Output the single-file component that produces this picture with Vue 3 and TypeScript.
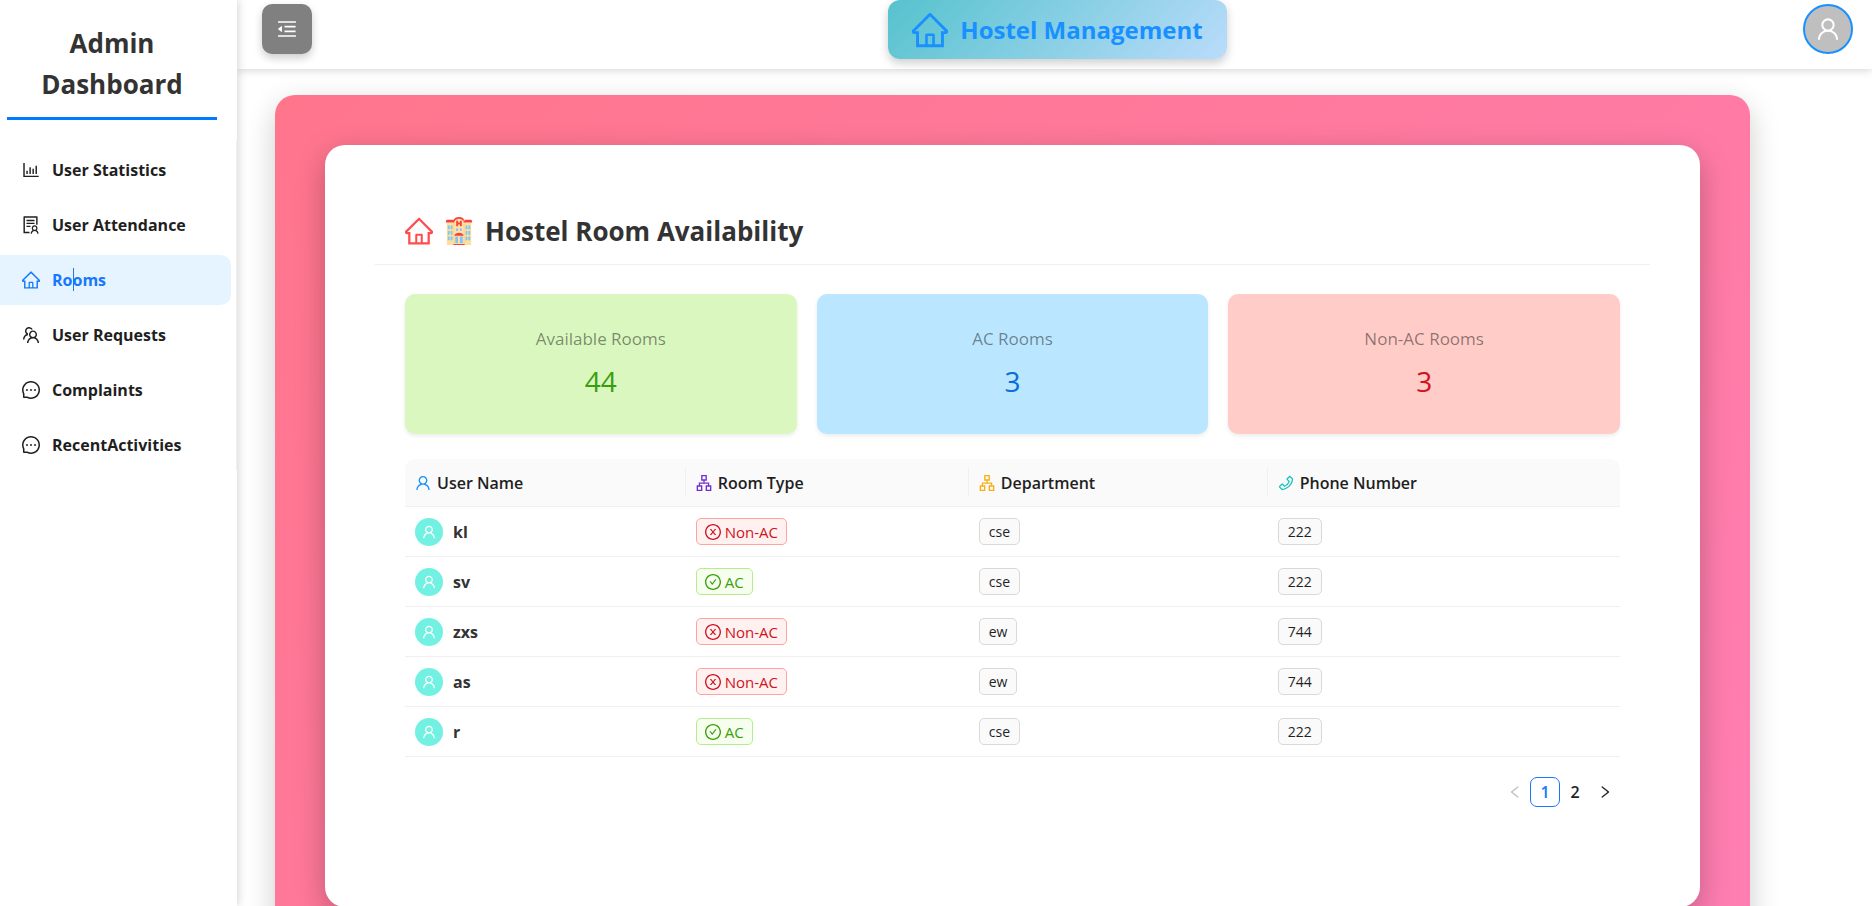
<script setup lang="ts">
import { ref } from 'vue'

const icons = {
  home: 'M946.5 505L560.1 118.8l-25.9-25.9a31.5 31.5 0 00-44.4 0L77.5 505a63.9 63.9 0 00-18.8 46c.4 35.2 29.7 63.3 64.9 63.3h42.5V940h691.8V614.3h43.4c17.1 0 33.2-6.7 45.3-18.8a63.6 63.6 0 0018.7-45.3c0-17-6.7-33.1-18.8-45.2zM568 868H456V664h112v204zm217.9-325.7V868H632V640c0-22.1-17.9-40-40-40H432c-22.1 0-40 17.9-40 40v228H238.1V542.3h-96l370-369.7 23.1 23.1L882 542.3h-96.1z',
  user: 'M858.5 763.6a374 374 0 00-80.6-119.5 375.63 375.63 0 00-119.5-80.6c-.4-.2-.8-.3-1.2-.5C719.5 518 760 444.7 760 362c0-137-111-248-248-248S264 225 264 362c0 82.7 40.5 156 102.8 201.1-.4.2-.8.3-1.2.5-44.8 18.9-85 46-119.5 80.6a375.63 375.63 0 00-80.6 119.5A371.7 371.7 0 00136 901.8a8 8 0 008 8.2h60c4.4 0 7.9-3.5 8-7.8 2-77.2 33-149.5 87.8-204.3 56.7-56.7 132-87.9 212.2-87.9s155.5 31.2 212.2 87.9C779 752.7 810 825 812 902.2c.1 4.4 3.6 7.8 8 7.8h60a8 8 0 008-8.2c-1-47.8-10.9-94.3-29.5-138.2zM512 534c-45.9 0-89.1-17.9-121.6-50.4S340 407.9 340 362c0-45.9 17.9-89.1 50.4-121.6S466.1 190 512 190s89.1 17.9 121.6 50.4S684 316.1 684 362c0 45.9-17.9 89.1-50.4 121.6S557.9 534 512 534z',
  chart: 'M888 792H200V168c0-4.4-3.6-8-8-8h-56c-4.4 0-8 3.6-8 8v688c0 4.4 3.6 8 8 8h752c4.4 0 8-3.6 8-8v-56c0-4.4-3.6-8-8-8zm-600-80h56c4.4 0 8-3.6 8-8V560c0-4.4-3.6-8-8-8h-56c-4.4 0-8 3.6-8 8v144c0 4.4 3.6 8 8 8zm152 0h56c4.4 0 8-3.6 8-8V384c0-4.4-3.6-8-8-8h-56c-4.4 0-8 3.6-8 8v320c0 4.4 3.6 8 8 8zm152 0h56c4.4 0 8-3.6 8-8V462c0-4.4-3.6-8-8-8h-56c-4.4 0-8 3.6-8 8v242c0 4.4 3.6 8 8 8zm152 0h56c4.4 0 8-3.6 8-8V304c0-4.4-3.6-8-8-8h-56c-4.4 0-8 3.6-8 8v400c0 4.4 3.6 8 8 8z',
  solution: 'M688 264c0-4.4-3.6-8-8-8H296c-4.4 0-8 3.6-8 8v48c0 4.4 3.6 8 8 8h384c4.4 0 8-3.6 8-8v-48zm-8 136H296c-4.4 0-8 3.6-8 8v48c0 4.4 3.6 8 8 8h384c4.4 0 8-3.6 8-8v-48c0-4.4-3.6-8-8-8zM480 544H296c-4.4 0-8 3.6-8 8v48c0 4.4 3.6 8 8 8h184c4.4 0 8-3.6 8-8v-48c0-4.4-3.6-8-8-8zm-48 308H208V148h560v344c0 4.4 3.6 8 8 8h56c4.4 0 8-3.6 8-8V108c0-17.7-14.3-32-32-32H168c-17.7 0-32 14.3-32 32v784c0 17.7 14.3 32 32 32h264c4.4 0 8-3.6 8-8v-56c0-4.4-3.6-8-8-8zm356.8-74.4c29-26.3 47.2-64.3 47.2-106.6 0-79.5-64.5-144-144-144s-144 64.5-144 144c0 42.3 18.2 80.3 47.2 106.6-57 32.5-96.2 92.7-99.2 162.1-.2 4.5 3.5 8.3 8 8.3h48.1c4.2 0 7.7-3.3 8-7.6C564 871.2 621.7 816 692 816s128 55.2 131.9 124.4c.2 4.2 3.7 7.6 8 7.6H880c4.6 0 8.2-3.8 8-8.3-2.9-69.5-42.2-129.6-99.2-162.1zM692 591c44.2 0 80 35.8 80 80s-35.8 80-80 80-80-35.8-80-80 35.8-80 80-80z',
  team: 'M824.2 699.9a301.55 301.55 0 00-86.4-60.4C783.1 602.8 812 546.8 812 484c0-110.8-92.4-201.7-203.2-200-109.1 1.7-197 90.6-197 200 0 62.8 29 118.8 74.2 155.5a300.95 300.95 0 00-86.4 60.4C345 754.6 314 826.8 312 903.8a8 8 0 008 8.2h56c4.3 0 7.9-3.4 8-7.7 1.9-58 25.4-112.3 66.7-153.5A226.62 226.62 0 01612 684c60.9 0 118.2 23.7 161.3 66.8C814.6 792 838 846.3 840 904.3c.1 4.3 3.7 7.7 8 7.7h56a8 8 0 008-8.2c-2-77-33-149.2-87.8-203.9zM612 612c-34.2 0-66.4-13.3-90.5-37.5a126.86 126.86 0 01-37.5-91.8c.3-32.8 13.4-64.5 36.3-88 24-24.6 56.1-38.3 90.4-38.7 33.9-.3 66.8 12.9 91 36.6 24.8 24.3 38.4 56.8 38.4 91.4 0 34.2-13.3 66.3-37.5 90.5A127.3 127.3 0 01612 612zM361.5 510.4c-.9-8.7-1.4-17.5-1.4-26.4 0-15.9 1.5-31.4 4.3-46.5.7-3.6-1.2-7.3-4.5-8.8-13.6-6.1-26.1-14.5-36.9-25.1a127.54 127.54 0 01-38.7-95.4c.9-32.1 13.8-62.6 36.3-85.6 24.7-25.3 57.9-39.1 93.2-38.7 31.9.3 62.7 12.6 86 34.4 7.9 7.4 14.7 15.6 20.4 24.4 2 3.1 5.9 4.4 9.3 3.2 17.6-6.1 36.2-10.4 55.3-12.4 5.6-.6 8.8-6.6 6.3-11.6-32.5-64.3-98.9-108.7-175.7-109.9-110.9-1.7-203.3 89.2-203.3 199.9 0 62.8 28.9 118.8 74.2 155.5-31.8 14.7-61.1 35-86.5 60.4-54.8 54.7-85.8 126.9-87.8 204a8 8 0 008 8.2h56.1c4.3 0 7.9-3.4 8-7.7 1.9-58 25.4-112.3 66.7-153.5 29.4-29.4 65.4-49.8 104.7-59.7 3.9-1 6.5-4.7 6-8.7z',
  message: 'M464 512a48 48 0 1096 0 48 48 0 10-96 0zm200 0a48 48 0 1096 0 48 48 0 10-96 0zm-400 0a48 48 0 1096 0 48 48 0 10-96 0zm661.2-173.6c-22.6-53.7-55-101.9-96.3-143.3a444.35 444.35 0 00-143.3-96.3C630.6 75.7 572.2 64 512 64h-2c-60.6.3-119.3 12.3-174.5 35.9a445.35 445.35 0 00-142 96.5c-40.9 41.3-73 89.3-95.2 142.8-23 55.4-34.6 114.3-34.3 174.9A449.4 449.4 0 00112 714v152a46 46 0 0046 46h152.1A449.4 449.4 0 00510 960h2.1c59.9 0 118-11.6 172.7-34.3a444.48 444.48 0 00142.8-95.2c41.3-40.9 73.8-88.7 96.5-142 23.6-55.2 35.6-113.9 35.9-174.5.3-60.9-11.5-120-34.8-175.6zm-151.1 438C704 845.8 611 884 512 884h-1.7c-60.3-.3-120.2-15.3-173.1-43.5l-8.4-4.5H188V695.2l-4.5-8.4C155.3 633.9 140.3 574 140 513.7c-.4-99.7 37.7-193.3 107.6-263.8 69.8-70.5 163.1-109.5 262.8-109.9h1.7c50 0 98.5 9.7 144.2 28.9 44.6 18.7 84.6 45.6 119 80 34.3 34.3 61.3 74.4 80 119 19.4 46.2 29.1 95.2 28.9 145.8-.6 99.6-39.7 192.9-110.1 262.7z',
  fold: 'M408 442h480c4.4 0 8-3.6 8-8v-56c0-4.4-3.6-8-8-8H408c-4.4 0-8 3.6-8 8v56c0 4.4 3.6 8 8 8zm-8 204c0 4.4 3.6 8 8 8h480c4.4 0 8-3.6 8-8v-56c0-4.4-3.6-8-8-8H408c-4.4 0-8 3.6-8 8v56zm504-486H120c-4.4 0-8 3.6-8 8v56c0 4.4 3.6 8 8 8h784c4.4 0 8-3.6 8-8v-56c0-4.4-3.6-8-8-8zm0 632H120c-4.4 0-8 3.6-8 8v56c0 4.4 3.6 8 8 8h784c4.4 0 8-3.6 8-8v-56c0-4.4-3.6-8-8-8zM115.4 518.9L271.7 642c5.8 4.6 14.4.5 14.4-6.9V388.9c0-7.4-8.5-11.5-14.4-6.9L115.4 505.1a8.74 8.74 0 000 13.8z',
  apartment: 'M908 640H804V488c0-4.4-3.6-8-8-8H548v-96h108c8.8 0 16-7.2 16-16V80c0-8.8-7.2-16-16-16H368c-8.8 0-16 7.2-16 16v288c0 8.8 7.2 16 16 16h108v96H228c-4.4 0-8 3.6-8 8v152H116c-8.8 0-16 7.2-16 16v288c0 8.8 7.2 16 16 16h288c8.8 0 16-7.2 16-16V656c0-8.8-7.2-16-16-16H292v-88h440v88H620c-8.8 0-16 7.2-16 16v288c0 8.8 7.2 16 16 16h288c8.8 0 16-7.2 16-16V656c0-8.8-7.2-16-16-16zm-564 76v168H176V716h168zm84-408V140h168v168H428zm420 576H680V716h168v168z',
  phone: 'M877.1 238.7L770.6 132.3c-13-13-30.4-20.3-48.8-20.3s-35.8 7.2-48.8 20.3L558.3 246.8c-13 13-20.3 30.5-20.3 48.9 0 18.5 7.2 35.8 20.3 48.9l89.6 89.7a405.46 405.46 0 01-86.4 127.3c-36.7 36.9-79.6 66-127.2 86.6l-89.6-89.7c-13-13-30.4-20.3-48.8-20.3a68.2 68.2 0 00-48.8 20.3L132.3 673c-13 13-20.3 30.5-20.3 48.9 0 18.5 7.2 35.8 20.3 48.9l106.4 106.4c22.2 22.2 52.8 34.9 84.2 34.9 6.5 0 12.8-.5 19.2-1.6 132.4-21.8 263.8-92.3 369.9-198.3C818 606 888.4 474.6 910.4 342.1c6.3-37.6-6.3-76.3-33.3-103.4zm-37.6 91.5c-19.5 117.9-82.9 235.5-178.4 331s-213 158.9-330.9 178.4c-14.8 2.5-30-2.5-40.8-13.2L184.9 721.9 295.7 611l119.8 120 .9.9 21.6-8a481.29 481.29 0 00285.7-285.8l8-21.6-120.8-120.7 110.8-110.9 104.5 104.5c10.8 10.8 15.8 26 13.3 40.8z',
  cross: 'M512 64C264.6 64 64 264.6 64 512s200.6 448 448 448 448-200.6 448-448S759.4 64 512 64zm0 820c-205.4 0-372-166.6-372-372s166.6-372 372-372 372 166.6 372 372-166.6 372-372 372zM685.4 354.8c0-4.4-3.6-8-8-8l-66 .3L512 465.6l-99.3-118.4-66.1-.3c-4.4 0-8 3.5-8 8 0 1.9.7 3.7 1.9 5.2l130.1 155L340.5 670a8.32 8.32 0 00-1.9 5.2c0 4.4 3.6 8 8 8l66.1-.3L512 564.4l99.3 118.4 66 .3c4.4 0 8-3.5 8-8 0-1.9-.7-3.7-1.9-5.2L553.5 515l130.1-155c1.2-1.4 1.8-3.3 1.8-5.2z',
  check: 'M512 64C264.6 64 64 264.6 64 512s200.6 448 448 448 448-200.6 448-448S759.4 64 512 64zm0 820c-205.4 0-372-166.6-372-372s166.6-372 372-372 372 166.6 372 372-166.6 372-372 372zM699 353h-46.9c-10.2 0-19.9 4.9-25.9 13.3L469 584.3l-71.2-98.8c-6-8.3-15.6-13.3-25.9-13.3H325c-6.5 0-10.3 7.4-6.5 12.7l124.6 172.8a31.8 31.8 0 0051.7 0l210.6-292c3.9-5.3.1-12.7-6.4-12.7z',
  left: 'M724 218.3V141c0-6.7-7.7-10.4-12.9-6.3L260.3 486.8a31.86 31.86 0 000 50.3l450.8 352.1c5.3 4.1 12.9.4 12.9-6.3v-77.3c0-4.9-2.3-9.6-6.1-12.6l-360-281 360-281.1c3.8-3 6.1-7.7 6.1-12.6z',
  right: 'M765.7 486.8L314.9 134.7A7.97 7.97 0 00302 141v77.3c0 4.9 2.3 9.6 6.1 12.6l360 281.1-360 281.1c-3.9 3-6.1 7.7-6.1 12.6V883c0 6.7 7.7 10.4 12.9 6.3l450.8-352.1a31.96 31.96 0 000-50.4z',
}
type IconName = keyof typeof icons

const menu: { label: string; icon: IconName }[] = [
  { label: 'User Statistics', icon: 'chart' },
  { label: 'User Attendance', icon: 'solution' },
  { label: 'Rooms', icon: 'home' },
  { label: 'User Requests', icon: 'team' },
  { label: 'Complaints', icon: 'message' },
  { label: 'RecentActivities', icon: 'message' },
]
const current = ref('Rooms')

const stats = [
  { title: 'Available Rooms', value: 44, tone: 'green' },
  { title: 'AC Rooms', value: 3, tone: 'blue' },
  { title: 'Non-AC Rooms', value: 3, tone: 'red' },
]

const columns: { label: string; icon: IconName; tone: string }[] = [
  { label: 'User Name', icon: 'user', tone: 'c-blue' },
  { label: 'Room Type', icon: 'apartment', tone: 'c-purple' },
  { label: 'Department', icon: 'apartment', tone: 'c-gold' },
  { label: 'Phone Number', icon: 'phone', tone: 'c-cyan' },
]

interface Row { name: string; ac: boolean; dept: string; phone: string }
const rows: Row[] = [
  { name: 'kl', ac: false, dept: 'cse', phone: '222' },
  { name: 'sv', ac: true, dept: 'cse', phone: '222' },
  { name: 'zxs', ac: false, dept: 'ew', phone: '744' },
  { name: 'as', ac: false, dept: 'ew', phone: '744' },
  { name: 'r', ac: true, dept: 'cse', phone: '222' },
]
</script>

<template>
  <div class="layout">
    <aside class="sider">
      <h2 class="brand">Admin Dashboard</h2>
      <nav class="menu">
        <a
          v-for="m in menu"
          :key="m.label"
          href="#"
          class="item"
          :class="{ active: m.label === current }"
          @click.prevent="current = m.label"
        >
          <svg class="icon i18" viewBox="64 64 896 896" aria-hidden="true"><path :d="icons[m.icon]" /></svg>
          <span>{{ m.label }}</span>
          <i v-if="m.label === 'Rooms'" class="caret"></i>
        </a>
      </nav>
    </aside>

    <div class="content">
      <header class="topbar">
        <button class="toggle" type="button" aria-label="Collapse menu">
          <svg class="icon i20" viewBox="64 64 896 896" aria-hidden="true"><path :d="icons.fold" /></svg>
        </button>
        <h1 class="logo">
          <svg class="icon i36" viewBox="64 64 896 896" aria-hidden="true"><path :d="icons.home" /></svg>
          <span>Hostel Management</span>
        </h1>
        <button class="profile" type="button" aria-label="Profile">
          <svg class="icon i24" viewBox="64 64 896 896" aria-hidden="true"><path :d="icons.user" /></svg>
        </button>
      </header>

      <main class="main">
        <div class="frame">
          <section class="card">
            <h2 class="card-title">
              <svg class="icon i28 c-red" viewBox="64 64 896 896" aria-hidden="true"><path :d="icons.home" /></svg>
              <svg class="hotel" viewBox="0 0 28 30" aria-hidden="true">
                <path fill="#ffdf9e" d="M1 6h26v24H1z" />
                <path fill="#ffd08a" d="M8 6c0-3 3-5 6-5s6 2 6 5v24H8z" />
                <path fill="#ffe3a8" d="M9 6c0-3 2-4 5-4s5 1 5 4v24H9z" />
                <path fill="#f9403c" d="M1 3h8v3H0V4zM27 3h-8v3h9V4zM8 4c1-3 3-4 6-4s5 1 6 4l-1 1c-1-2-3-3-5-3s-4 1-5 3zM11 4h2v2h2V4h2v6h-2V8h-2v2h-2zM9 20c1-4 9-4 10 0zM8 29h12v1H8z" />
                <path fill="#7fc6f5" d="M2 9h2v4H2zM5 9h2v4H5zM2 15h2v4H2zM5 15h2v4H5zM2 21h2v4H2zM5 21h2v4H5zM21 9h2v4h-2zM24 9h2v4h-2zM21 15h2v4h-2zM24 15h2v4h-2zM21 21h2v4h-2zM24 21h2v4h-2zM11 12h2v3h-2zM15 12h2v3h-2zM10 21h3v7h-3zM15 21h3v7h-3z" />
              </svg>
              <span>Hostel Room Availability</span>
            </h2>

            <div class="card-body">
              <div class="stats">
                <div v-for="s in stats" :key="s.title" class="stat" :class="s.tone">
                  <div class="stat-title">{{ s.title }}</div>
                  <div class="stat-value">{{ s.value }}</div>
                </div>
              </div>

              <table class="table">
                <thead>
                  <tr>
                    <th v-for="c in columns" :key="c.label" scope="col">
                      <div class="th">
                        <svg class="icon i16" :class="c.tone" viewBox="64 64 896 896" aria-hidden="true"><path :d="icons[c.icon]" /></svg>
                        <span>{{ c.label }}</span>
                      </div>
                    </th>
                  </tr>
                </thead>
                <tbody>
                  <tr v-for="r in rows" :key="r.name">
                    <td>
                      <div class="person">
                        <span class="avatar">
                          <svg class="icon i14" viewBox="64 64 896 896" aria-hidden="true"><path :d="icons.user" /></svg>
                        </span>
                        <strong>{{ r.name }}</strong>
                      </div>
                    </td>
                    <td>
                      <span class="tag" :class="r.ac ? 'tag-ok' : 'tag-no'">
                        <svg class="icon i16" viewBox="64 64 896 896" aria-hidden="true"><path :d="r.ac ? icons.check : icons.cross" /></svg>
                        {{ r.ac ? 'AC' : 'Non-AC' }}
                      </span>
                    </td>
                    <td><span class="tag">{{ r.dept }}</span></td>
                    <td><span class="tag">{{ r.phone }}</span></td>
                  </tr>
                </tbody>
              </table>

              <nav class="pager" aria-label="Pages">
                <button type="button" disabled aria-label="Previous page">
                  <svg class="icon i14" viewBox="64 64 896 896" aria-hidden="true"><path :d="icons.left" /></svg>
                </button>
                <button type="button" class="on">1</button>
                <button type="button">2</button>
                <button type="button" aria-label="Next page">
                  <svg class="icon i14" viewBox="64 64 896 896" aria-hidden="true"><path :d="icons.right" /></svg>
                </button>
              </nav>
            </div>
          </section>
        </div>
      </main>
    </div>
  </div>
</template>

<style>
body {
  margin: 0;
  background: #fff;
}
</style>

<style scoped>
* {
  box-sizing: border-box;
}
.layout {
  display: flex;
  height: 100vh;
  overflow: hidden;
  font-family: 'Open Sans', 'Noto Sans', sans-serif;
  font-size: 16px;
  color: #1f1f1f;
}
h1, h2 {
  margin: 0;
}
button {
  padding: 0;
  font: inherit;
  cursor: pointer;
}
.icon {
  display: block;
  flex: none;
  fill: currentColor;
}
.i14 { width: 14px; height: 14px; }
.i16 { width: 16px; height: 16px; }
.i18 { width: 18px; height: 18px; }
.i20 { width: 20px; height: 20px; }
.i24 { width: 24px; height: 24px; }
.i28 { width: 28px; height: 28px; }
.i36 { width: 36px; height: 36px; }
.c-red { color: #ff4d4f; }
.c-blue { color: #1890ff; }
.c-purple { color: #722ed1; }
.c-gold { color: #faad14; }
.c-cyan { color: #13c2c2; }

.sider {
  position: relative;
  z-index: 2;
  flex: none;
  width: 237px;
  background: #fff;
  box-shadow: 2px 0 8px rgba(0, 0, 0, 0.15);
}
.brand {
  width: 210px;
  margin: 0 0 20px 7px;
  padding: 23px 20px 12px;
  border-bottom: 3px solid #007bff;
  font-size: 26px;
  line-height: 41px;
  font-weight: 700;
  text-align: center;
  color: #333;
}
.menu {
  display: flex;
  flex-direction: column;
  gap: 5px;
  padding: 5px 5px 0 0;
  border-right: 1px solid #f0f0f0;
}
.item {
  position: relative;
  display: flex;
  align-items: center;
  gap: 12px;
  height: 50px;
  padding-left: 22px;
  border-radius: 0 10px 10px 0;
  color: #1f1f1f;
  font-size: 16px;
  font-weight: 700;
  text-decoration: none;
}
.item.active {
  background: #e6f4ff;
  color: #1677ff;
}
.caret {
  position: absolute;
  left: 73px;
  top: 13px;
  width: 1px;
  height: 23px;
  background: #1677ff;
}

.content {
  flex: 1;
  min-width: 0;
  display: flex;
  flex-direction: column;
}
.topbar {
  position: relative;
  z-index: 1;
  flex: none;
  display: flex;
  align-items: flex-start;
  justify-content: space-between;
  height: 69px;
  padding: 0 19px 0 25px;
  background: #fff;
  box-shadow: 0 2px 8px rgba(0, 0, 0, 0.15);
}
.toggle,
.profile {
  display: flex;
  align-items: center;
  justify-content: center;
  width: 50px;
  height: 50px;
  margin-top: 4px;
  color: #fff;
}
.toggle {
  border: 0;
  border-radius: 10px;
  background: #808080;
  box-shadow: 0 4px 8px rgba(0, 0, 0, 0.2);
}
.profile {
  border: 2px solid #1890ff;
  border-radius: 50%;
  background: #bfbfbf;
}
.logo {
  display: flex;
  align-items: center;
  gap: 12px;
  height: 59px;
  padding: 0 24px;
  border-radius: 12px;
  background: linear-gradient(135deg, #56c2cd, #badcfb);
  box-shadow: 0 4px 10px rgba(0, 0, 0, 0.2);
  color: #1890ff;
  font-size: 24px;
  font-weight: 700;
}

.main {
  flex: 1;
  min-height: 0;
  padding: 26px 122px 0 38px;
}
.frame {
  padding: 50px;
  border-radius: 20px;
  background: linear-gradient(135deg, #ff758c, #ff7eb3);
  box-shadow: 0 10px 30px rgba(0, 0, 0, 0.2);
}
.card {
  min-height: calc(100vh - 144px);
  padding: 50px;
  border-radius: 20px;
  background: #fff;
  box-shadow: 0 10px 30px rgba(0, 0, 0, 0.25);
}
.card-title {
  display: flex;
  align-items: center;
  gap: 12px;
  height: 70px;
  padding: 2px 30px 0;
  border-bottom: 1px solid #f0f0f0;
  color: #333;
  font-size: 26px;
  font-weight: 700;
}
.hotel {
  flex: none;
  width: 28px;
  height: 28px;
}
.card-body {
  padding: 29px 30px 0;
}
.stats {
  display: grid;
  grid-template-columns: repeat(3, 1fr);
  gap: 20px;
}
.stat {
  height: 140px;
  padding: 32px 20px;
  border-radius: 10px;
  box-shadow: 0 2px 4px rgba(0, 0, 0, 0.08);
  text-align: center;
}
.stat-title {
  font-size: 17px;
  line-height: 26px;
  color: rgba(0, 0, 0, 0.45);
}
.stat-value {
  margin-top: 8px;
  font-size: 28px;
  line-height: 42px;
}
.green { background: #d9f7be; }
.blue { background: #bae7ff; }
.red { background: #ffccc7; }
.green .stat-value { color: #389e0d; }
.blue .stat-value { color: #096dd9; }
.red .stat-value { color: #cf1322; }

.table {
  width: 100%;
  margin-top: 25px;
  border-collapse: separate;
  border-spacing: 0;
  table-layout: fixed;
}
th:nth-child(1) { width: 23.1%; }
th:nth-child(2) { width: 23.3%; }
th:nth-child(3) { width: 24.6%; }
th,
td {
  padding: 0 10px;
  border-bottom: 1px solid #f0f0f0;
  text-align: left;
}
th {
  position: relative;
  height: 48px;
  background: #fafafa;
  font-size: 16px;
  font-weight: 600;
}
th:first-child { border-top-left-radius: 10px; }
th:last-child { border-top-right-radius: 10px; }
th:not(:last-child)::after {
  content: '';
  position: absolute;
  right: 0;
  top: 9px;
  width: 1px;
  height: 28px;
  background: #f0f0f0;
}
td {
  height: 50px;
}
.th {
  display: flex;
  align-items: center;
  gap: 6px;
}
.person {
  display: flex;
  align-items: center;
  gap: 10px;
  color: #333;
}
.avatar {
  display: flex;
  align-items: center;
  justify-content: center;
  width: 28px;
  height: 28px;
  border-radius: 50%;
  background: #72f1e3;
  color: #fff;
}
.tag {
  display: inline-flex;
  align-items: center;
  gap: 5px;
  height: 27px;
  padding: 0 9px;
  border: 1px solid #d9d9d9;
  border-radius: 5px;
  background: #fafafa;
  font-size: 14px;
  vertical-align: middle;
}
.tag-ok,
.tag-no {
  gap: 4px;
  padding: 0 8px;
  font-size: 15px;
}
.tag-ok {
  border-color: #b7eb8f;
  background: #f6ffed;
  color: #389e0d;
}
.tag-no {
  border-color: #ffa39e;
  background: #fff1f0;
  color: #cf1322;
}
.pager {
  display: flex;
  justify-content: flex-end;
  margin-top: 20px;
}
.pager button {
  display: flex;
  align-items: center;
  justify-content: center;
  width: 30px;
  height: 30px;
  border: 1px solid transparent;
  border-radius: 7px;
  background: transparent;
  color: #1f1f1f;
  font-weight: 600;
}
.pager button:disabled {
  color: #bfbfbf;
}
.pager .on {
  border-color: #1677ff;
  background: #fff;
  color: #1677ff;
}
</style>
